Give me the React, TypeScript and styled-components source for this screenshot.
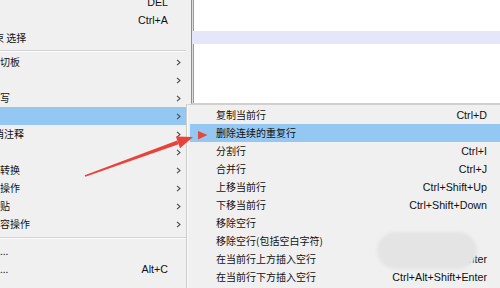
import {FC} from 'react'
import styled, {createGlobalStyle} from 'styled-components'

const GlobalStyle = createGlobalStyle`
  html, body {
    margin: 0;
    padding: 0;
    width: 500px;
    height: 288px;
    overflow: hidden;
    background: #f0f0f0;
  }
`

type MenuEntry =
  | {kind: 'item'; label: string; shortcut?: string; sub?: boolean; active?: boolean}
  | {kind: 'sep'; size: number}

const EditMenu: MenuEntry[] = [
  {kind: 'item', label: '删除', shortcut: 'DEL'},
  {kind: 'item', label: '全选', shortcut: 'Ctrl+A'},
  {kind: 'item', label: '开始/结束 选择'},
  {kind: 'sep', size: 6},
  {kind: 'item', label: '复制到剪切板', sub: true},
  {kind: 'item', label: '缩进', sub: true},
  {kind: 'item', label: '转换大小写', sub: true},
  {kind: 'item', label: '行操作', sub: true, active: true},
  {kind: 'item', label: '注释/取消注释', sub: true},
  {kind: 'item', label: '自动完成', sub: true},
  {kind: 'item', label: '文档格式转换', sub: true},
  {kind: 'item', label: '空白字符操作', sub: true},
  {kind: 'item', label: '选择性粘贴', sub: true},
  {kind: 'item', label: '对选定内容操作', sub: true},
  {kind: 'sep', size: 9},
  {kind: 'item', label: '列块模式...'},
  {kind: 'item', label: '列块编辑...', shortcut: 'Alt+C'},
]

const LineMenu = [
  {label: '复制当前行', shortcut: 'Ctrl+D'},
  {label: '删除连续的重复行', active: true},
  {label: '分割行', shortcut: 'Ctrl+I'},
  {label: '合并行', shortcut: 'Ctrl+J'},
  {label: '上移当前行', shortcut: 'Ctrl+Shift+Up'},
  {label: '下移当前行', shortcut: 'Ctrl+Shift+Down'},
  {label: '移除空行'},
  {label: '移除空行(包括空白字符)'},
  {label: '在当前行上方插入空行', shortcut: 'Ctrl+Alt+Enter'},
  {label: '在当前行下方插入空行', shortcut: 'Ctrl+Alt+Shift+Enter'},
]

const Chevron: FC = () => (
  <svg width="5" height="7" viewBox="0 0 5 7">
    <polyline points="1,0.8 4,3.5 1,6.2" fill="none" stroke="#4a4a4a" strokeWidth="1.1"/>
  </svg>
)

export default function App() {
  return (
    <Page>
      <GlobalStyle/>
      <LeftMenu>
        {EditMenu.map((entry, i) =>
          entry.kind === 'sep' ? (
            <Separator key={i} size={entry.size}/>
          ) : (
            <LeftRow key={i} active={entry.active}>
              <LeftLabel>{entry.label}</LeftLabel>
              <Shortcut>{entry.shortcut}</Shortcut>
              <ArrowCell>{entry.sub && <Chevron/>}</ArrowCell>
            </LeftRow>
          )
        )}
      </LeftMenu>
      <RightPane>
        <Editor>
          <EditorLine/>
          <EditorLine active/>
          <EditorLine/>
        </Editor>
        <SubMenu>
          {LineMenu.map((item) => (
            <SubRow key={item.label} active={item.active}>
              <SubLabel>{item.label}</SubLabel>
              <Shortcut>{item.shortcut}</Shortcut>
            </SubRow>
          ))}
        </SubMenu>
      </RightPane>

      <Smudge/>

      <Annotation width="500" height="288" viewBox="0 0 500 288">
        <polygon
          points="85.3,176.7 84.7,175.3 177.2,140.5 178.6,144.3"
          fill="#e8423a"
        />
        <polygon points="193,137 175.9,136.6 180.0,148.2" fill="#e8423a"/>
        <polygon points="198,131 207.5,135 198,139.5" fill="#e5473f"/>
      </Annotation>
    </Page>
  )
}

const Page = styled.div`
  position: relative;
  display: flex;
  width: 500px;
  height: 288px;
  overflow: hidden;
  background: #f0f0f0;
  font-family: "Noto Sans CJK SC", "Liberation Sans", sans-serif;
  color: #111;
`

const LeftMenu = styled.div`
  width: 189px;
  flex-shrink: 0;
  margin-top: -7px;
  display: flex;
  flex-direction: column;
`

const LeftRow = styled.div<{active?: boolean}>`
  height: 18px;
  display: flex;
  align-items: center;
  margin-right: 3px;
  background: ${p => p.active ? '#94c8f3' : 'transparent'};
`

const LeftLabel = styled.span`
  margin-left: -40px;
  flex: 1;
  font-size: 10px;
  white-space: nowrap;
  line-height: 18px;
`

const Shortcut = styled.span`
  font-family: "Liberation Sans", Arial, sans-serif;
  font-size: 10.7px;
  white-space: nowrap;
  line-height: 18px;
`

const ArrowCell = styled.span`
  width: 16px;
  display: flex;
  align-items: center;
  justify-content: center;
  padding-left: 2px;
`

const Separator = styled.div<{size: number}>`
  height: ${p => p.size}px;
  display: flex;
  align-items: center;
  margin-right: 3px;

  &::after {
    content: '';
    flex: 1;
    height: 1px;
    background: #d4d4d4;
    box-shadow: 0 1px 0 #fbfbfb;
  }
`

const RightPane = styled.div`
  flex: 1;
  display: flex;
  flex-direction: column;
  min-width: 0;
`

const Editor = styled.div`
  height: 104px;
  flex-shrink: 0;
  margin-left: 2px;
  padding-top: 18px;
  box-sizing: border-box;
  background: #fff;
  border-left: 1px solid #8e8e8e;
  border-bottom: 1px solid #cfcfcf;
  box-shadow: inset 1px 0 #dedede, inset 2px 0 #9d9d9d;
`

const EditorLine = styled.div<{active?: boolean}>`
  height: 13px;
  background: ${p => p.active ? '#e6e6fa' : 'transparent'};
`

const SubMenu = styled.div`
  position: relative;
  z-index: 1;
  margin-left: -2px;
  padding: 1px 0 0 2px;
  background: #f0f0f0;
  border-top: 1px solid #d0d0d0;
  border-left: 1px solid #fafafa;
  box-shadow: -1px 0 #cccccc;
  flex: 1;
`

const SubRow = styled.div<{active?: boolean}>`
  height: 18px;
  display: flex;
  align-items: center;
  padding: 0 13px 0 26px;
  background: ${p => p.active ? '#94c8f3' : 'transparent'};
`

const SubLabel = styled.span`
  flex: 1;
  font-size: 10px;
  white-space: nowrap;
  line-height: 18px;
`

const Smudge = styled.div`
  position: absolute;
  left: 377px;
  top: 232px;
  width: 100px;
  height: 37px;
  border-radius: 19px;
  background: #e4e4e4;
  filter: blur(1.5px);
  z-index: 2;
`

const Annotation = styled.svg`
  position: absolute;
  left: 0;
  top: 0;
  z-index: 3;
  pointer-events: none;
`
